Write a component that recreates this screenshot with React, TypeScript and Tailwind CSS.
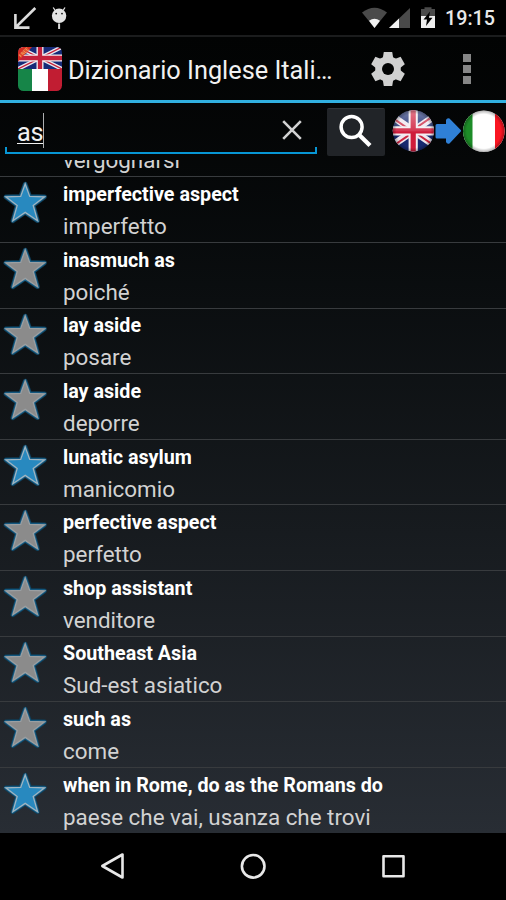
import React from "react";

type Entry = { term: string; translation: string; starred: boolean };

const entries: Entry[] = [
  { term: "imperfective aspect", translation: "imperfetto", starred: true },
  { term: "inasmuch as", translation: "poiché", starred: false },
  { term: "lay aside", translation: "posare", starred: false },
  { term: "lay aside", translation: "deporre", starred: false },
  { term: "lunatic asylum", translation: "manicomio", starred: true },
  { term: "perfective aspect", translation: "perfetto", starred: false },
  { term: "shop assistant", translation: "venditore", starred: false },
  { term: "Southeast Asia", translation: "Sud-est asiatico", starred: false },
  { term: "such as", translation: "come", starred: false },
  { term: "when in Rome, do as the Romans do", translation: "paese che vai, usanza che trovi", starred: true },
];

const starPoints = "25.2,7 29.7,19.4 44.6,19.8 33.2,28.4 37.6,43.8 25.2,35.4 12.8,43.8 17.2,28.4 5.8,19.8 20.7,19.4";

function Star({ on }: { on: boolean }) {
  return (
    <svg width="51" height="52" viewBox="0 0 51 52" className="block shrink-0">
      <polygon points={starPoints} fill="none" stroke="#0f3e58" strokeWidth="4.6" strokeLinejoin="round" />
      <polygon points={starPoints} fill="none" stroke="#17608a" strokeWidth="3" strokeLinejoin="round" />
      <polygon points={starPoints} fill={on ? "#2889bf" : "#8b8b8b"} stroke={on ? "#9fb4c0" : "#9a9fa2"} strokeWidth="1.3" />
    </svg>
  );
}

function StatusBar() {
  return (
    <header className="flex h-[35px] shrink-0 bg-black">
      <svg width="440" height="35" viewBox="0 0 440 35" className="block">
        <path d="M35.3 8 L16.5 26.5 M15.4 14 V27.6 H29.5" fill="none" stroke="#dcdcdc" strokeWidth="2.6" />
        <path d="M53.2 7.5 l2 3 M65 7.5 l-2 3" stroke="#e4e4e4" strokeWidth="1.3" />
        <circle cx="59.1" cy="15.8" r="7.2" fill="#e4e4e4" />
        <path d="M59.1 23.5 V29" stroke="#d8d8d8" strokeWidth="2" />
        <circle cx="56.2" cy="13.6" r="0.9" fill="#111" />
        <circle cx="62" cy="13.6" r="0.9" fill="#111" />
        <path d="M362 12.6 Q374.5 3 387 12.6 L374.5 28 Z" fill="#4a4a4a" />
        <path d="M369 20.7 Q374.5 17 380 20.7 L374.5 28 Z" fill="#f2f2f2" />
        <path d="M410 8 V28 H389 Z" fill="#4a4a4a" />
        <path d="M399 18.5 V28 H389 Z" fill="#f2f2f2" />
        <path d="M421 9 h3.500 V7.200 h7 V9 h3.500 V17 h-14 Z" fill="#4a4a4a" />
        <path d="M421 16 h14 V28 h-14 Z" fill="#efefef" />
        <path d="M430 11.500 L423.500 19.500 H427 L426 26 L432.500 17.700 H429 Z" fill="#000" />
      </svg>
      <span className="ml-[5px] mt-[7px] text-[19.7px] leading-[24px] font-medium text-[#e9e9e9]">19:15</span>
    </header>
  );
}

function AppIcon() {
  return (
    <svg width="44" height="44" viewBox="0 0 44 44" className="block shrink-0">
      <clipPath id="tile"><rect width="44" height="44" rx="5.5" /></clipPath>
      <clipPath id="tileFlag"><rect width="44" height="22" /></clipPath>
      <g clipPath="url(#tile)">
        <g clipPath="url(#tileFlag)">
          <rect width="44" height="22" fill="#162a78" />
          <path d="M0 0 L44 22 M44 0 L0 22" stroke="#e9e9ef" strokeWidth="4" />
          <path d="M0 0 L44 22 M44 0 L0 22" stroke="#c5203b" strokeWidth="1.300" />
          <path d="M22 0 V22 M0 11 H44" stroke="#f0eef1" strokeWidth="7" />
          <path d="M22 0 V22 M0 11 H44" stroke="#c5203b" strokeWidth="4.300" />
        </g>
        <rect y="22" width="14" height="22" fill="#168548" />
        <rect x="14" y="22" width="16" height="22" fill="#fff" />
        <rect x="30" y="22" width="14" height="22" fill="#c11d32" />
        <path d="M0 0 H14 L0 14.500 Z" fill="#d42c22" />
        <text x="6" y="7.200" textAnchor="middle" transform="rotate(-45 6 5.500)" fontSize="5" fontWeight="bold" fill="#f5a15a">FREE</text>
      </g>
    </svg>
  );
}

function ActionBar() {
  return (
    <div className="flex h-[65px] shrink-0 items-start border-t-2 border-[#1b1c1d]">
      <div className="ml-[18px] mt-[10px]"><AppIcon /></div>
      <h1 className="ml-[6px] mt-[18px] w-[270px] whitespace-nowrap text-[25.3px] leading-[31px] font-normal text-[#f1f1f1]">
        Dizionario Inglese Itali…
      </h1>
      <svg width="36" height="36" viewBox="0 0 36 36" className="mt-[14px] ml-[32px] block shrink-0">
        <g fill="#d0d0d0">
          <circle cx="18" cy="18" r="12.800" />
          {[0, 60, 120].map((a) => (
            <path key={a} transform={"rotate(" + a + " 18 18)"} d="M13.800 1 H22.200 L23.200 7 V29 L22.200 35 H13.800 L12.800 29 V7 Z" />
          ))}
        </g>
        <circle cx="18" cy="18" r="6" fill="#030404" />
      </svg>
      <div className="ml-[57px] mt-[17px] flex flex-col gap-[3px]">
        <i className="block size-[8px] bg-[#868686]" />
        <i className="block size-[8px] bg-[#868686]" />
        <i className="block size-[8px] bg-[#868686]" />
      </div>
    </div>
  );
}

function LanguageSwitch() {
  return (
    <svg width="121" height="57" viewBox="385 103 121 57" className="block shrink-0">
      <defs>
        <clipPath id="uk"><circle cx="413.400" cy="130.800" r="20.600" /></clipPath>
        <clipPath id="it"><circle cx="483.800" cy="131.300" r="20.800" /></clipPath>
        <radialGradient id="shade">
          <stop offset="0.82" stopColor="#000" stopOpacity="0" />
          <stop offset="1" stopColor="#000" stopOpacity="0.3" />
        </radialGradient>
        <linearGradient id="gloss" x1="0" y1="0" x2="0" y2="1">
          <stop offset="0" stopColor="#fff" stopOpacity="0.4" />
          <stop offset="0.5" stopColor="#fff" stopOpacity="0.12" />
          <stop offset="0.52" stopColor="#fff" stopOpacity="0" />
        </linearGradient>
      </defs>
      <g clipPath="url(#uk)">
        <rect x="392" y="110" width="43" height="42" fill="#17296f" />
        <path d="M391 115.300 L435.800 146.300 M435.800 115.300 L391 146.300" stroke="#eee7ee" strokeWidth="7" />
        <path d="M391 116.800 L412 131.300 M435.800 114.300 L414 129.300 M414.800 132.300 L435.800 146.800 M413 132.300 L391 147.300" stroke="#cb2640" strokeWidth="2" />
        <path d="M413.200 109 V153 M391 130.800 H435" stroke="#f3edf1" strokeWidth="9.200" />
        <path d="M413.200 109 V153 M391 130.800 H435" stroke="#cf1c3b" strokeWidth="5.200" />
        <rect x="392" y="110" width="43" height="42" fill="url(#gloss)" />
        <circle cx="413.400" cy="130.800" r="20.600" fill="url(#shade)" />
      </g>
      <path d="M437 124 h9 v-4 q1 -2.500 3.500 -1.500 L461 130.300 v1 L449.500 143.500 q-2.500 1 -3.500 -1.500 v-3.500 h-9 q-1.500 0 -1.500 -1.500 v-11.500 q0 -1.500 1.500 -1.500 Z" fill="#2f80d6" />
      <g clipPath="url(#it)">
        <rect x="462" y="110" width="44" height="43" fill="#fff" />
        <rect x="462" y="110" width="10.500" height="43" fill="#1d8c28" />
        <rect x="495" y="110" width="11" height="43" fill="#fa1622" />
        <circle cx="483.800" cy="131.300" r="20.800" fill="url(#shade)" />
      </g>
    </svg>
  );
}

function SearchRow() {
  return (
    <div className="flex h-[57px] shrink-0 items-start">
      <div className="relative ml-[5px] flex h-[51px] w-[312px] items-start pl-[12px] pt-[10px]">
        <span className="mt-[4px] h-[27px] border-b border-[#f0f0f0] text-[25.3px] leading-[31px] tracking-[-0.3px] text-[#f1f1f1]">as</span>
        <i className="block h-[35px] w-px bg-[#aeb0b1]" />
        <svg width="20" height="20" viewBox="0 0 20 20" className="ml-auto mr-[15px] mt-[7px] block">
          <path d="M1.200 1.200 L18.800 18.800 M18.800 1.200 L1.200 18.800" stroke="#d2d2d2" strokeWidth="2.600" />
        </svg>
        <div className="absolute inset-x-0 bottom-0 h-[7px] border-x-2 border-b-2 border-[#0796d5]" />
      </div>
      <button className="ml-[10px] mt-[5px] flex h-[48px] w-[58px] shrink-0 rounded-[2px] border-t border-[#303438] bg-[#212428]">
        <svg width="58" height="47" viewBox="0 0 58 47" className="block">
          <circle cx="24.600" cy="18" r="10.500" fill="none" stroke="#fff" strokeWidth="3.500" />
          <path d="M32.300 26 L43 36.500" stroke="#fff" strokeWidth="4.300" />
        </svg>
      </button>
      <LanguageSwitch />
    </div>
  );
}

function Row({ entry }: { entry: Entry }) {
  return (
    <li className="flex h-[65.63px] shrink-0 border-t border-[#383b3e]">
      <Star on={entry.starred} />
      <div className="ml-[12px] whitespace-nowrap">
        <p className="mt-[5.7px] text-[19.72px] leading-[24px] font-bold text-white">{entry.term}</p>
        <p className="mt-[6px] text-[22.4px] leading-[26px] text-[#d2d2d2]">{entry.translation}</p>
      </div>
    </li>
  );
}

function NavigationBar() {
  return (
    <nav className="h-[67px] shrink-0 bg-black">
      <svg width="506" height="67" viewBox="0 833 506 67" className="block" fill="none" stroke="#e8e8e8" strokeWidth="2.600" strokeLinejoin="round">
        <path d="M122.500 854.500 V877.500 L102.300 866 Z" />
        <circle cx="253.200" cy="866.300" r="11.300" />
        <rect x="383.500" y="856.300" width="20" height="20" />
      </svg>
    </nav>
  );
}

export default function App() {
  return (
    <div className="flex h-[900px] w-[506px] flex-col overflow-hidden bg-black font-[Roboto,sans-serif]">
      <StatusBar />
      <main className="flex h-[798px] shrink-0 flex-col bg-linear-to-b from-[#020303] to-[#282d34]">
        <ActionBar />
        <div className="h-[3px] shrink-0 bg-[#31b0e0]" />
        <SearchRow />
        <ul className="flex h-[673px] flex-col justify-end overflow-hidden pb-[0.4px]">
          <li className="flex shrink-0 pb-[3.5px] pl-[63px] text-[22.4px] leading-[26px] text-[#d2d2d2]">vergognarsi</li>
          {entries.map((e, i) => <Row key={i} entry={e} />)}
        </ul>
      </main>
      <NavigationBar />
    </div>
  );
}
